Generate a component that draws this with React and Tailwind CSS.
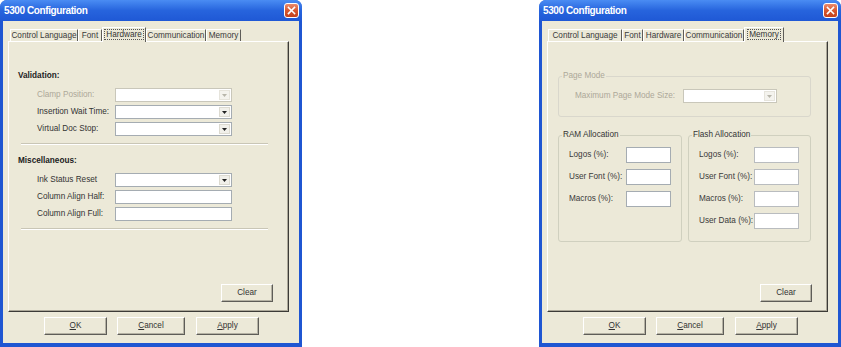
import React from 'react'

const FONT = "font-['Liberation_Sans',Arial,sans-serif]"

function CloseButton() {
  return (
    <div className="flex h-[15px] w-[15px] items-center justify-center rounded-[3px] border border-white bg-gradient-to-b from-[#eb8a6c] via-[#d8582f] to-[#c3401c]">
      <svg width="9" height="9" viewBox="0 0 9 9">
        <path d="M1.5 1.5 L7.5 7.5 M7.5 1.5 L1.5 7.5" stroke="#fff" strokeWidth="1.6" strokeLinecap="square" />
      </svg>
    </div>
  )
}

function Combo({ w, disabled }) {
  return (
    <div
      style={{ width: w }}
      className={`flex h-[14px] items-stretch border bg-white p-px ${disabled ? 'border-[#c9c7ba]' : 'border-[#a5acb2]'}`}
    >
      <div className="flex-1" />
      <div className={`flex w-[11px] items-center justify-center border ${disabled ? 'border-[#e6e4dc] bg-[#f4f3ee]' : 'border-[#dcdad0] bg-[#f1f0ea]'}`}>
        <svg width="5" height="3" viewBox="0 0 5 3">
          <path d="M0 0 H5 L2.5 3 Z" fill={disabled ? '#b8b6ab' : '#222'} />
        </svg>
      </div>
    </div>
  )
}

function TextBox({ w, h = 14, light }) {
  return <div style={{ width: w, height: h }} className={`border bg-white ${light ? 'border-[#b9bcbf]' : 'border-[#a5acb2]'}`} />
}

function Btn({ w, children }) {
  return (
    <div
      style={{ width: w }}
      className="flex h-[18px] items-center justify-center border border-t-white border-l-white border-r-[#5e5d58] border-b-[#5e5d58] bg-[#ece9d8] text-[#333] shadow-[inset_-1px_-1px_0_#b5b2a4]"
    >
      {children}
    </div>
  )
}

function Tabs({ tabs, selected, left }) {
  return (
    <div style={{ paddingLeft: left }} className="flex h-[14px] items-end">
      {tabs.map(([label, w]) =>
        label === selected ? (
          <div
            key={label}
            style={{ width: w }}
            className="relative z-10 -mb-px flex h-[15px] items-center justify-center border-t border-l border-r border-t-white border-l-white border-r-[#5e5d58] bg-[#ece9d8] pb-[2px] text-[#333]"
          >
            <span className="border border-dotted border-[#555] px-px leading-[9px]">{label}</span>
          </div>
        ) : (
          <div
            key={label}
            style={{ width: w }}
            className="flex h-[12px] items-center justify-center border-t border-l border-r border-t-white border-l-white border-r-[#5e5d58] bg-[#ece9d8] text-[#3a3a3a]"
          >
            {label}
          </div>
        )
      )}
    </div>
  )
}

function Dialog({ tabs, selected, tabLeft, children }) {
  return (
    <div className="flex h-[347px] w-[302px] flex-col rounded-t-[7px] bg-[#1f56d2]">
      <div className="flex h-[21px] items-center justify-between rounded-t-[7px] bg-gradient-to-b from-[#4a8cf3] via-[#2764dd] to-[#1f58d5] pl-[4px] pr-[3px]">
        <span className="text-[10px] font-bold tracking-[-0.4px] text-white">5300 Configuration</span>
        <CloseButton />
      </div>
      <div className="mx-[3px] mb-[4px] flex flex-1 flex-col bg-[#ece9d8] pt-[6px]">
        <Tabs tabs={tabs} selected={selected} left={tabLeft} />
        <div className="ml-[5px] flex h-[271px] w-[281px] flex-col border border-t-white border-l-white border-r-[#3c3b37] border-b-[#3c3b37] shadow-[inset_-1px_-1px_0_#aca899]">
          {children}
          <div className="mt-auto flex justify-end pb-[9px] pr-[15px]">
            <Btn w={52}>Clear</Btn>
          </div>
        </div>
        <div className="mt-[5px] flex pl-[41px]">
          <Btn w={63}><span><span className="underline">O</span>K</span></Btn>
          <div className="ml-[10px]">
            <Btn w={68}><span><span className="underline">C</span>ancel</span></Btn>
          </div>
          <div className="ml-[11px]">
            <Btn w={63}><span><span className="underline">A</span>pply</span></Btn>
          </div>
        </div>
      </div>
    </div>
  )
}

function Row({ label, disabled, children }) {
  return (
    <div className="flex h-[14px] items-center pl-[28px]">
      <div className={`w-[78px] ${disabled ? 'text-[#aca899]' : 'text-[#333]'}`}>{label}</div>
      {children}
    </div>
  )
}

function Separator({ mt }) {
  return <div style={{ marginTop: mt }} className="ml-[12px] h-[2px] w-[247px] border-t border-b border-t-[#c9c6b6] border-b-white" />
}

function HardwarePanel() {
  return (
    <>
      <div className="pl-[9px] pt-[28px] font-bold leading-[11px] text-[#222]">Validation:</div>
      <div className="mt-[7px] flex flex-col gap-[3px]">
        <Row label="Clamp Position:" disabled><Combo w={117} disabled /></Row>
        <Row label="Insertion Wait Time:"><Combo w={117} /></Row>
        <Row label="Virtual Doc Stop:"><Combo w={117} /></Row>
      </div>
      <Separator mt={7} />
      <div className="mt-[10px] pl-[9px] font-bold leading-[11px] text-[#222]">Miscellaneous:</div>
      <div className="mt-[7px] flex flex-col gap-[3px]">
        <Row label="Ink Status Reset"><Combo w={117} /></Row>
        <Row label="Column Align Half:"><TextBox w={117} /></Row>
        <Row label="Column Align Full:"><TextBox w={117} /></Row>
      </div>
      <Separator mt={7} />
    </>
  )
}

function Group({ title, className, children }) {
  return (
    <fieldset className={`rounded-[3px] border border-[#d0d0bf] ${className}`}>
      <legend className="ml-[3px] px-px leading-[10px] text-[#333]">{title}</legend>
      {children}
    </fieldset>
  )
}

function AllocRow({ label, labelW, light }) {
  return (
    <div className="flex h-[16px] items-center pl-[10px]">
      <div style={{ width: labelW }} className="text-[#3a3a3a]">{label}</div>
      <TextBox w={45} h={16} light={light} />
    </div>
  )
}

function MemoryPanel() {
  return (
    <>
      <fieldset className="ml-[10px] mt-[29px] w-[253px] rounded-[3px] border border-[#d9d7cc] pb-[13px] pt-[8px]">
        <legend className="ml-[3px] px-px leading-[10px] text-[#aca899]">Page Mode</legend>
        <div className="flex h-[14px] items-center pl-[16px]">
          <div className="w-[108px] text-[#aca899]">Maximum Page Mode Size:</div>
          <Combo w={94} disabled />
        </div>
      </fieldset>
      <div className="ml-[10px] mt-[13px] flex gap-[6px]">
        <Group title="RAM Allocation" className="w-[124px] pt-[7px]">
          <div className="flex flex-col gap-[6px]">
            <AllocRow label="Logos (%):" labelW={57} />
            <AllocRow label="User Font (%):" labelW={57} />
            <AllocRow label="Macros (%):" labelW={57} />
          </div>
        </Group>
        <Group title="Flash Allocation" className="w-[123px] pb-[12px] pt-[7px]">
          <div className="flex flex-col gap-[6px]">
            <AllocRow label="Logos (%):" labelW={55} light />
            <AllocRow label="User Font (%):" labelW={55} light />
            <AllocRow label="Macros (%):" labelW={55} light />
            <AllocRow label="User Data (%):" labelW={55} light />
          </div>
        </Group>
      </div>
    </>
  )
}

export default function App() {
  return (
    <div className={`flex h-[347px] w-[841px] justify-between overflow-hidden bg-white text-[8.2px] leading-[10px] ${FONT}`}>
      <Dialog
        tabs={[['Control Language', 68], ['Font', 24], ['Hardware', 44], ['Communication', 60], ['Memory', 35]]}
        selected="Hardware"
        tabLeft={7}
      >
        <HardwarePanel />
      </Dialog>
      <Dialog
        tabs={[['Control Language', 74], ['Font', 21], ['Hardware', 41], ['Communication', 60], ['Memory', 40]]}
        selected="Memory"
        tabLeft={6}
      >
        <MemoryPanel />
      </Dialog>
    </div>
  )
}
